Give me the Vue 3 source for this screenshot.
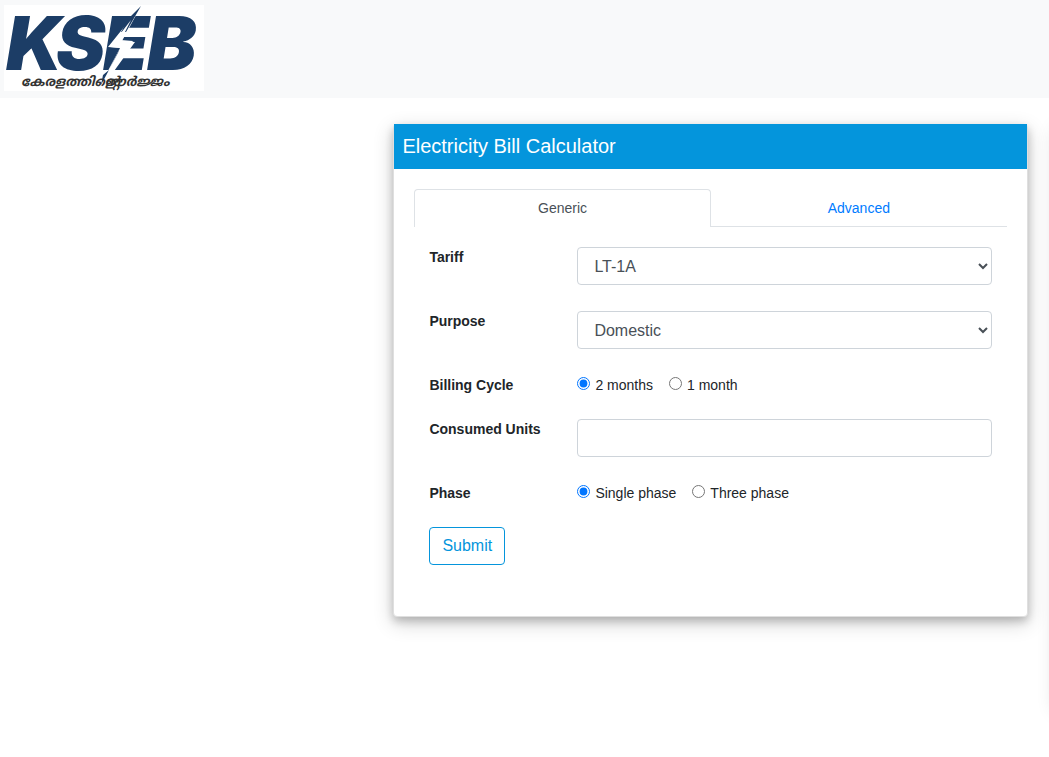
<script setup>
import { ref } from 'vue'

const tab = ref('generic')
const tariff = ref('LT-1A')
const purpose = ref('Domestic')
const cycle = ref('2')
const units = ref('')
const phase = ref('single')
</script>

<template>
  <div class="page">
    <header class="navbar">
      <a class="brand" href="#" aria-label="KSEB">
        <svg viewBox="0 0 200 86" width="200" height="86" aria-hidden="true">
          <rect width="200" height="86" fill="#fff" />
          <text class="wordmark" y="65">
            <tspan x="2">K</tspan><tspan x="52">S</tspan><tspan x="99">E</tspan><tspan x="143">B</tspan>
          </text>
          <path d="M137 1 L104 42 L116 43 L97 79 L100 80 L131 37 L118 36 Z" fill="#fff" />
          <path d="M137 1 L124 14 L117 27 L122 27 Z M116 43 L114 48 L97 80 L99 70 L105 65 Z" fill="#1c3d66" />
          <path d="M127 15 L106 42 L117 43 L103 70 L129 36 L117 35 Z" fill="#fff" />
          <text class="motto" x="17" y="81">കേരളത്തിന്റെ</text>
          <text class="motto" x="101" y="81">ഊർജ്ജം</text>
        </svg>
      </a>
    </header>

    <main class="content">
      <section class="card calculator">
        <h1 class="title">Electricity Bill Calculator</h1>
        <div class="body">
          <nav class="tabs">
            <a href="#generic" :class="{ active: tab === 'generic' }" @click.prevent="tab = 'generic'">Generic</a>
            <a href="#advanced" :class="{ active: tab === 'advanced' }" @click.prevent="tab = 'advanced'">Advanced</a>
          </nav>
          <form class="form" @submit.prevent>
            <div class="row">
              <label class="name" for="tariff">Tariff</label>
              <select id="tariff" v-model="tariff" class="control">
                <option>LT-1A</option>
              </select>
            </div>
            <div class="row">
              <label class="name" for="purpose">Purpose</label>
              <select id="purpose" v-model="purpose" class="control">
                <option>Domestic</option>
              </select>
            </div>
            <div class="row" role="radiogroup" aria-labelledby="cycle-name">
              <span id="cycle-name" class="name">Billing Cycle</span>
              <div class="choices">
                <label><input v-model="cycle" type="radio" name="cycle" value="2">2 months</label>
                <label><input v-model="cycle" type="radio" name="cycle" value="1">1 month</label>
              </div>
            </div>
            <div class="row">
              <label class="name" for="units">Consumed Units</label>
              <input id="units" v-model="units" class="control" type="text">
            </div>
            <div class="row" role="radiogroup" aria-labelledby="phase-name">
              <span id="phase-name" class="name">Phase</span>
              <div class="choices">
                <label><input v-model="phase" type="radio" name="phase" value="single">Single phase</label>
                <label><input v-model="phase" type="radio" name="phase" value="three">Three phase</label>
              </div>
            </div>
            <button class="submit" type="submit">Submit</button>
          </form>
        </div>
      </section>
      <aside class="card side"></aside>
    </main>
  </div>
</template>

<style>
body {
  margin: 0;
  background: #fff;
}
</style>

<style scoped>
.page {
  min-height: 100vh;
  display: flex;
  flex-direction: column;
  font: 14px/20px "Liberation Sans", Arial, sans-serif;
  color: #212529;
}
.page *,
.page {
  box-sizing: border-box;
}
.navbar {
  background: #f8f9fa;
  padding: 5px 4px 7px;
}
.brand,
.brand svg {
  display: block;
  width: 200px;
}
.wordmark {
  font: italic 900 74px Inter, "Liberation Sans", sans-serif;
  fill: #1c3d66;
}
.motto {
  font: italic bold 13px "Liberation Sans", "Noto Sans Malayalam", "Noto Sans", sans-serif;
  fill: #333;
}
.content {
  flex: 1;
  display: flex;
  align-items: flex-start;
  gap: 29px;
  padding: 26px 0 40px 37.5%;
  overflow: hidden;
}
.card {
  background: #fff;
  border: 1px solid #dfdfdf;
  border-radius: 4px;
  box-shadow: 0 4px 8px rgba(0, 0, 0, 0.2), 0 6px 20px rgba(0, 0, 0, 0.19);
}
.calculator {
  flex: 1;
  min-width: 0;
}
.side {
  flex: 0 0 300px;
  height: 580px;
  margin-right: -308px;
}
.title {
  margin: -1px 0 0;
  padding: 8px;
  background: #0495dc;
  color: #fff;
  font-size: 20px;
  line-height: 29px;
  font-weight: 400;
}
.body {
  padding: 20px 20px 51px;
}
.tabs {
  display: flex;
  border-bottom: 1px solid #dee2e6;
}
.tabs a {
  flex: 1;
  margin-bottom: -1px;
  padding: 8px;
  border: 1px solid transparent;
  border-bottom: 0;
  border-radius: 4px 4px 0 0;
  text-align: center;
  line-height: 21px;
  color: #007bff;
  text-decoration: none;
}
.tabs a.active {
  background: #fff;
  border-color: #dee2e6;
  color: #495057;
}
.form {
  display: grid;
  gap: 24px;
  padding: 20px 15px 0;
}
.row {
  display: grid;
  grid-template-columns: 118px minmax(0, 1fr);
  column-gap: 30px;
}
.row:has(.control) {
  min-height: 40px;
}
.name {
  font-weight: 700;
}
.control {
  width: 100%;
  height: 38px;
  padding: 6px 12px;
  border: 1px solid #ced4da;
  border-radius: 4px;
  background: #fff;
  color: #495057;
  font: 16px/24px "Liberation Sans", Arial, sans-serif;
}
.choices {
  display: flex;
  flex-wrap: wrap;
  gap: 16px;
}
.choices label {
  display: flex;
  align-items: flex-start;
}
.choices input {
  width: 13px;
  height: 13px;
  margin: 2px 5px 0 0;
  accent-color: #0075ff;
}
.submit {
  justify-self: start;
  padding: 6px 12px;
  border: 1px solid #0495dc;
  border-radius: 4px;
  background: #fff;
  color: #0495dc;
  font: 16px/24px "Liberation Sans", Arial, sans-serif;
}
</style>
